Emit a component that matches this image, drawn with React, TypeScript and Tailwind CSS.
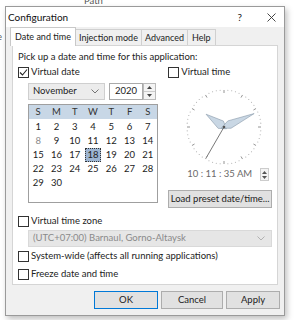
import React from "react";

const days = [
  [1, 2, 3, 4, 5, 6, 7],
  [8, 9, 10, 11, 12, 13, 14],
  [15, 16, 17, 18, 19, 20, 21],
  [22, 23, 24, 25, 26, 27, 28],
  [29, 30],
];

function Checkbox({ checked }: { checked?: boolean }) {
  return (
    <span className="flex h-[11px] w-[11px] shrink-0 items-center justify-center border border-[#333] bg-white">
      {checked && (
        <svg width="9" height="9" viewBox="0 0 9 9">
          <path d="M1 4.5 L3.5 7 L8 1.5" fill="none" stroke="#222" strokeWidth="1.1" />
        </svg>
      )}
    </span>
  );
}

function Spinner() {
  return (
    <div className="flex h-[17px] w-[13px] flex-col border border-[#bbb] bg-[#f4f4f4]">
      <div className="flex flex-1 items-center justify-center border-b border-[#ccc]">
        <svg width="5" height="3" viewBox="0 0 5 3"><path d="M0 3 L2.5 0 L5 3Z" fill="#444" /></svg>
      </div>
      <div className="flex flex-1 items-center justify-center">
        <svg width="5" height="3" viewBox="0 0 5 3"><path d="M0 0 L2.5 3 L5 0Z" fill="#444" /></svg>
      </div>
    </div>
  );
}

function Clock() {
  const cx = 40;
  const cy = 40;
  const r = 37;
  const marks = [];
  for (let i = 0; i < 60; i++) {
    const a = (i * Math.PI) / 30;
    const s = Math.sin(a);
    const c = -Math.cos(a);
    if (i % 5 === 0) {
      marks.push(
        <line key={i} x1={cx + s * (r - 3)} y1={cy + c * (r - 3)} x2={cx + s * r} y2={cy + c * r} stroke="#888" strokeWidth="0.9" />
      );
    } else {
      marks.push(<circle key={i} cx={cx + s * r} cy={cy + c * r} r="0.55" fill="#aaa" />);
    }
  }
  const hand = (deg: number, len: number, w: number) => {
    const a = (deg * Math.PI) / 180;
    const dx = Math.sin(a);
    const dy = -Math.cos(a);
    const px = -dy;
    const py = dx;
    const bx = cx + dx * len * 0.18;
    const by = cy + dy * len * 0.18;
    return `${cx - dx * 3},${cy - dy * 3} ${bx + px * w},${by + py * w} ${cx + dx * len},${cy + dy * len} ${bx - px * w},${by - py * w}`;
  };
  const sa = (210 * Math.PI) / 180;
  return (
    <svg width="80" height="80" viewBox="0 0 80 80">
      {marks}
      <polygon points={hand(305.5, 22, 4.5)} fill="#c9d7e4" stroke="#8797a8" strokeWidth="0.6" />
      <polygon points={hand(66, 33, 4)} fill="#c9d7e4" stroke="#8797a8" strokeWidth="0.6" />
      <line x1={cx} y1={cy} x2={cx + Math.sin(sa) * 35} y2={cy - Math.cos(sa) * 35} stroke="#555" strokeWidth="0.8" />
      <circle cx={cx} cy={cy} r="1.3" fill="#555" />
    </svg>
  );
}

export default function App() {
  return (
    <div className="relative h-[320px] w-[294px] overflow-hidden bg-white text-[9.5px] text-[#222]" style={{ fontFamily: "Lato, 'Noto Sans', sans-serif" }}>
      <div className="absolute left-[84px] top-[-6px] text-[#555]">Path</div>
      <div className="absolute left-[-3px] top-[30px] text-[#555]">e</div>
      <div className="pl-[5px] pt-[6px]">
        <div className="relative flex h-[310px] w-[280px] flex-col border border-[#9a9a9a] bg-[#f0f0f0] shadow-[2px_3px_6px_rgba(0,0,0,0.25)]">
          {/* title bar */}
          <div className="flex h-[20px] items-center bg-white pl-[2px] pr-[8px]">
            <span className="text-[10px] text-[#111]">Configuration</span>
            <span className="ml-auto mr-[25px] text-[10px]">?</span>
            <svg width="9" height="9" viewBox="0 0 9 9"><path d="M0.5 0.5 L8.5 8.5 M8.5 0.5 L0.5 8.5" stroke="#333" strokeWidth="0.9" /></svg>
          </div>
          {/* tabs */}
          <div className="flex h-[18px] items-end pl-[4px] text-[9px]">
            <div className="relative z-10 mb-[-1px] flex h-[19px] items-center border border-b-0 border-[#c8c8c8] bg-white px-[4px]">Date and time</div>
            <div className="flex h-[16px] items-center border border-b-0 border-l-0 border-[#d0d0d0] bg-[#f0f0f0] px-[3px]">Injection mode</div>
            <div className="flex h-[16px] items-center border border-b-0 border-l-0 border-[#d0d0d0] bg-[#f0f0f0] px-[3px]">Advanced</div>
            <div className="flex h-[16px] items-center border border-b-0 border-l-0 border-[#d0d0d0] bg-[#f0f0f0] px-[4px]">Help</div>
          </div>
          {/* panel */}
          <div className="mx-[6px] flex h-[240px] flex-col border border-[#d5d5d5] bg-white pl-[5px] pr-[5px] pt-[5px]">
            <div className="h-[12px] leading-[12px]">Pick up a date and time for this application:</div>
            <div className="mt-[3px] flex">
              <div className="flex w-[146px] flex-col">
                <div className="flex h-[12px] items-center gap-[2px]">
                  <Checkbox checked />
                  <span>Virtual date</span>
                </div>
                <div className="ml-[10px] mt-[5px] flex items-center">
                  <div className="flex h-[17px] w-[77px] items-center border border-[#cfcfcf] bg-[#ececec] pl-[4px] pr-[5px]">
                    <span>November</span>
                    <svg className="ml-auto" width="8" height="5" viewBox="0 0 8 5"><path d="M0.5 0.5 L4 4 L7.5 0.5" fill="none" stroke="#666" strokeWidth="0.9" /></svg>
                  </div>
                  <div className="ml-[4px] flex h-[17px] w-[34px] items-center justify-center border border-[#aaa] bg-white">2020</div>
                  <Spinner />
                </div>
                <div className="ml-[10px] mt-[4px] h-[99px] w-[130px] border border-[#9f9f9f] bg-white">
                  <div className="grid h-[14px] grid-cols-7 bg-[#c8d7e6] text-center leading-[14px] text-[#333]">
                    {["S", "M", "T", "W", "T", "F", "S"].map((d, i) => (
                      <span key={i}>{d}</span>
                    ))}
                  </div>
                  <div className="mt-[1px]">
                    {days.map((row, ri) => (
                      <div key={ri} className="grid h-[14px] grid-cols-7 text-center leading-[14px]">
                        {row.map((d) => (
                          <span key={d} className={d === 18 ? "mx-[1px] border border-dotted border-[#333] bg-[#9db5d2] leading-[12px]" : d === 8 ? "text-[#8a8a8a]" : ""}>
                            {d}
                          </span>
                        ))}
                      </div>
                    ))}
                  </div>
                </div>
              </div>
              <div className="ml-[6px] flex w-[105px] flex-col">
                <div className="flex h-[12px] items-center gap-[2px]">
                  <Checkbox />
                  <span>Virtual time</span>
                </div>
                <div className="ml-[16px] mt-[9px]">
                  <Clock />
                </div>
                <div className="mt-[1px] flex h-[13px] items-center">
                  <span className="ml-[19px] text-[#6a6a6a]">10 : 11 : 35 AM</span>
                  <div className="ml-auto mr-[3px] flex h-[13px] w-[9px] flex-col items-center justify-center gap-[2px] border border-[#ccc] bg-[#f4f4f4]">
                    <svg width="5" height="3" viewBox="0 0 5 3"><path d="M0 3 L2.5 0 L5 3Z" fill="#555" /></svg>
                    <svg width="5" height="3" viewBox="0 0 5 3"><path d="M0 0 L2.5 3 L5 0Z" fill="#555" /></svg>
                  </div>
                </div>
                <div className="mt-[9px] flex h-[18px] items-center justify-center border border-[#adadad] bg-[#e1e1e1]">Load preset date/time...</div>
              </div>
            </div>
            <div className="mt-[7px] flex h-[12px] items-center gap-[2px]">
              <Checkbox />
              <span>Virtual time zone</span>
            </div>
            <div className="ml-[10px] mt-[3px] flex h-[17px] items-center border border-[#d9d9d9] bg-[#e6e6e6] pl-[4px] pr-[6px] text-[#8a8a8a]">
              <span>(UTC+07:00) Barnaul, Gorno-Altaysk</span>
              <svg className="ml-auto" width="8" height="5" viewBox="0 0 8 5"><path d="M0.5 0.5 L4 4 L7.5 0.5" fill="none" stroke="#aaa" strokeWidth="0.9" /></svg>
            </div>
            <div className="mt-[3px] flex h-[12px] items-center gap-[2px]">
              <Checkbox />
              <span>System-wide (affects all running applications)</span>
            </div>
            <div className="mt-[6px] flex h-[12px] items-center gap-[2px]">
              <Checkbox />
              <span>Freeze date and time</span>
            </div>
          </div>
          {/* buttons */}
          <div className="mt-[6px] flex justify-end gap-[3px] pr-[4px]">
            <div className="flex h-[18px] w-[64px] items-center justify-center border border-[#0078d7] bg-[#e1e1e1]">OK</div>
            <div className="flex h-[18px] w-[62px] items-center justify-center border border-[#adadad] bg-[#e1e1e1]">Cancel</div>
            <div className="flex h-[18px] w-[54px] items-center justify-center border border-[#adadad] bg-[#e1e1e1]">Apply</div>
          </div>
        </div>
      </div>
    </div>
  );
}
